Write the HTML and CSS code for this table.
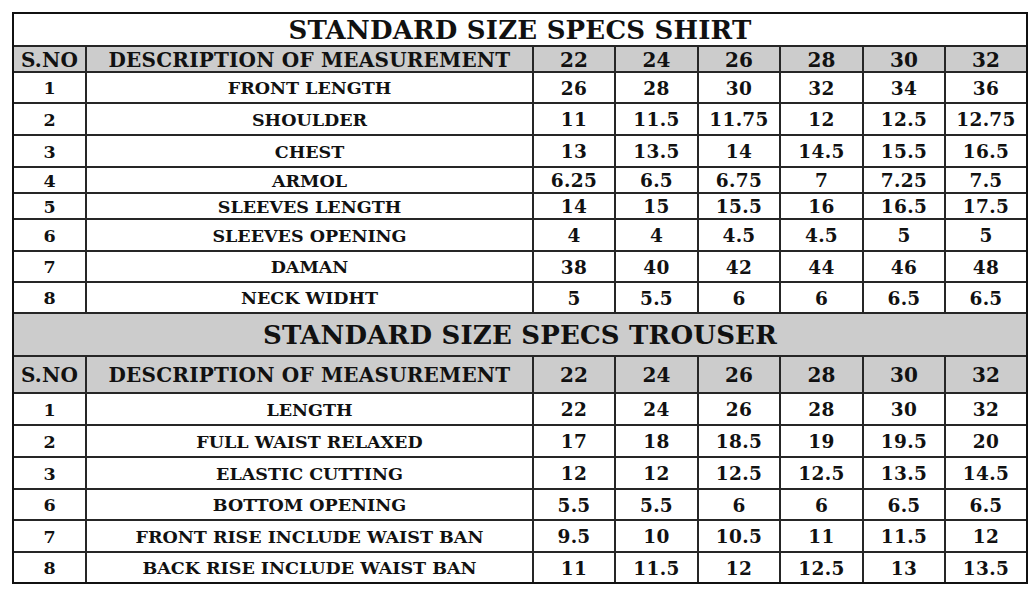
FILE: index.html
```html
<!DOCTYPE html>
<html>
<head>
<meta charset="utf-8">
<link rel="stylesheet" href="styles.css">
</head>
<body>
<div class="sheet">
  <div class="title white r1">STANDARD SIZE SPECS SHIRT</div>

  <div class="c hd">S.NO</div><div class="c hd">DESCRIPTION OF MEASUREMENT</div>
  <div class="c hd num">22</div><div class="c hd num">24</div><div class="c hd num">26</div><div class="c hd num">28</div><div class="c hd num">30</div><div class="c hd num">32</div>

  <div class="c">1</div><div class="c">FRONT LENGTH</div><div class="c num">26</div><div class="c num">28</div><div class="c num">30</div><div class="c num">32</div><div class="c num">34</div><div class="c num">36</div>
  <div class="c">2</div><div class="c">SHOULDER</div><div class="c num">11</div><div class="c num">11.5</div><div class="c num">11.75</div><div class="c num">12</div><div class="c num">12.5</div><div class="c num">12.75</div>
  <div class="c">3</div><div class="c">CHEST</div><div class="c num">13</div><div class="c num">13.5</div><div class="c num">14</div><div class="c num">14.5</div><div class="c num">15.5</div><div class="c num">16.5</div>
  <div class="c">4</div><div class="c">ARMOL</div><div class="c num">6.25</div><div class="c num">6.5</div><div class="c num">6.75</div><div class="c num">7</div><div class="c num">7.25</div><div class="c num">7.5</div>
  <div class="c">5</div><div class="c">SLEEVES LENGTH</div><div class="c num">14</div><div class="c num">15</div><div class="c num">15.5</div><div class="c num">16</div><div class="c num">16.5</div><div class="c num">17.5</div>
  <div class="c">6</div><div class="c">SLEEVES OPENING</div><div class="c num">4</div><div class="c num">4</div><div class="c num">4.5</div><div class="c num">4.5</div><div class="c num">5</div><div class="c num">5</div>
  <div class="c">7</div><div class="c">DAMAN</div><div class="c num">38</div><div class="c num">40</div><div class="c num">42</div><div class="c num">44</div><div class="c num">46</div><div class="c num">48</div>
  <div class="c">8</div><div class="c">NECK WIDHT</div><div class="c num">5</div><div class="c num">5.5</div><div class="c num">6</div><div class="c num">6</div><div class="c num">6.5</div><div class="c num">6.5</div>

  <div class="title grey">STANDARD SIZE SPECS TROUSER</div>

  <div class="c hd">S.NO</div><div class="c hd">DESCRIPTION OF MEASUREMENT</div>
  <div class="c hd num">22</div><div class="c hd num">24</div><div class="c hd num">26</div><div class="c hd num">28</div><div class="c hd num">30</div><div class="c hd num">32</div>

  <div class="c">1</div><div class="c">LENGTH</div><div class="c num">22</div><div class="c num">24</div><div class="c num">26</div><div class="c num">28</div><div class="c num">30</div><div class="c num">32</div>
  <div class="c">2</div><div class="c">FULL WAIST RELAXED</div><div class="c num">17</div><div class="c num">18</div><div class="c num">18.5</div><div class="c num">19</div><div class="c num">19.5</div><div class="c num">20</div>
  <div class="c">3</div><div class="c">ELASTIC CUTTING</div><div class="c num">12</div><div class="c num">12</div><div class="c num">12.5</div><div class="c num">12.5</div><div class="c num">13.5</div><div class="c num">14.5</div>
  <div class="c">6</div><div class="c">BOTTOM OPENING</div><div class="c num">5.5</div><div class="c num">5.5</div><div class="c num">6</div><div class="c num">6</div><div class="c num">6.5</div><div class="c num">6.5</div>
  <div class="c">7</div><div class="c">FRONT RISE INCLUDE WAIST BAN</div><div class="c num">9.5</div><div class="c num">10</div><div class="c num">10.5</div><div class="c num">11</div><div class="c num">11.5</div><div class="c num">12</div>
  <div class="c">8</div><div class="c">BACK RISE INCLUDE WAIST BAN</div><div class="c num">11</div><div class="c num">11.5</div><div class="c num">12</div><div class="c num">12.5</div><div class="c num">13</div><div class="c num">13.5</div>
</div>
</body>
</html>
```

FILE: styles.css
```css
html, body {
  margin: 0;
  padding: 0;
  background: #ffffff;
}

body {
  padding: 12px 0 0 12px;
}

.sheet {
  width: 1012px;
  border: 2px solid #111111;
  background: #262626;
  display: grid;
  gap: 2px;
  grid-template-columns: 71px 445px 80px 81px 80px 81px 80px 80px;
  grid-template-rows: 31px 24px 29px 30px 30px 24px 24px 30px 29px 29px 41px 35px 30px 30px 30px 29px 30px 29px;
  font-family: "DejaVu Serif", "Liberation Serif", serif;
  font-weight: bold;
  color: #111111;
}

.title {
  grid-column: 1 / -1;
  display: flex;
  align-items: center;
  justify-content: center;
  font-size: 26px;
  letter-spacing: 0.2px;
}

.white { background: #ffffff; }
.grey { background: #cccccc; }

.c {
  background: #ffffff;
  display: flex;
  align-items: center;
  justify-content: center;
  font-size: 17.5px;
  padding-top: 1px;
  white-space: nowrap;
}

.c.hd {
  background: #cccccc;
  font-size: 20px;
  letter-spacing: 0.2px;
}

.num {
  font-size: 18.5px;
  letter-spacing: 0.3px;
}

.c.hd.num {
  font-size: 20px;
  letter-spacing: 0;
}
```
